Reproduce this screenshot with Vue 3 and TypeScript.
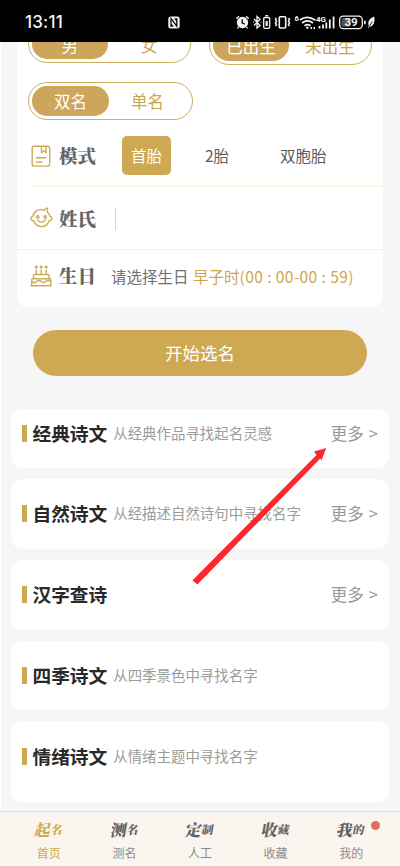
<script setup lang="ts">
interface Section {
  title: string
  hint?: string
  more?: boolean
  size: 'short' | 'normal' | 'tall'
}
interface Tab {
  big: string
  small: string
  label: string
  active?: boolean
  dot?: boolean
}

const modes: string[] = ['首胎', '2胎', '双胞胎']
const sections: Section[] = [
  { title: '经典诗文', hint: '从经典作品寻找起名灵感', more: true, size: 'short' },
  { title: '自然诗文', hint: '从经描述自然诗句中寻找名字', more: true, size: 'normal' },
  { title: '汉字查诗', more: true, size: 'normal' },
  { title: '四季诗文', hint: '从四季景色中寻找名字', size: 'normal' },
  { title: '情绪诗文', hint: '从情绪主题中寻找名字', size: 'tall' },
]
const tabs: Tab[] = [
  { big: '起', small: '名', label: '首页', active: true },
  { big: '测', small: '名', label: '测名' },
  { big: '定', small: '制', label: '人工' },
  { big: '收', small: '藏', label: '收藏' },
  { big: '我', small: '的', label: '我的', dot: true },
]
</script>

<template>
  <div class="screen">
    <header class="status">
      <span class="time">13:11</span>
      <svg class="nfc" width="12" height="13" viewBox="0 0 12 13">
        <rect x=".3" y=".5" width="11.4" height="12" rx="2.5" fill="#f2f2f2" />
        <path d="M3 11V2.5L8.8 10.2V2M5.2 10.7L3 8.2M6.6 2.3L8.8 4.8" fill="none" stroke="#000" stroke-width="1.2" />
      </svg>
      <svg class="sys" width="142" height="20" viewBox="0 0 142 20" fill="none" stroke="#f4f4f4" stroke-width="1.3">
        <g>
          <circle cx="7.5" cy="10.5" r="5" fill="#f4f4f4" />
          <path d="M1.3 6.8L4 4.2M13.7 6.8L11 4.2M3.7 15l-1.3 1.4M11.3 15l1.3 1.4" />
          <path d="M7.2 7.3v3.5l2.6 1.4" stroke="#000" />
        </g>
        <path d="M19 7l6 6.500L22 16V4.500l3 2.700L19 13.500M18.200 10.200h.8M25.600 10.200h.8" stroke-width="1.300" />
        <rect x="28.700" y="5.500" width="6" height="10.800" rx="1.300" />
        <path d="M30.200 3.700h3" />
        <rect x="30.600" y="9" width="2.200" height="5" fill="#f4f4f4" stroke="none" />
        <rect x="44.300" y="4.700" width="6.400" height="11.300" rx="1" stroke-width="1.600" />
        <path d="M41.500 6l-1 1.500 1 1.700-1 1.700 1 1.700-1 1.600M53.500 6l1 1.500-1 1.700 1 1.700-1 1.700 1 1.600" stroke-width="1.500" />
        <path d="M65 8Q72 2.800 80.500 8.200M67 11q5.500-4.100 11 0M69.500 13.700q3.100-2.100 6 0" stroke-width="1.700" />
        <circle cx="72.300" cy="15.800" r="1.200" fill="#f4f4f4" stroke="none" />
        <path d="M75.500 16h1.500M78.500 16h1.500" stroke-width="1.800" />
        <path d="M84.500 16.500v-2.500M88 16.500v-4M91.300 16.500v-6M94.800 16.500v-9M98.600 16.500v-12" stroke-width="1.800" />
        <rect x="104.700" y="4.200" width="22.600" height="12.400" rx="3.500" />
        <rect x="106.500" y="6" width="9" height="8.800" rx="1.500" fill="#555" stroke="none" />
        <path d="M129.800 8.700v3.500" stroke-width="1.700" />
        <path d="M139.300 4.500c-5 2-7 5.300-5.500 9.300l-.9 2.500 1.700-1.500c4-.8 5.500-4.200 4.700-10.300z" fill="#f4f4f4" stroke="none" />
        <path d="M134.300 14.500l3-5" stroke="#000" stroke-width=".8" />
        <g fill="#f4f4f4" stroke="none" class="sys-text">
          <text x="59.500" y="8.800" font-size="7.500">6</text>
          <text x="81" y="9.800" font-size="8">4G</text>
          <text x="116" y="14.300" font-size="11.500" text-anchor="middle">39</text>
        </g>
      </svg>
    </header>

    <main class="content">
      <section class="form">
        <div class="toggles">
          <div class="toggle first"><span class="on">男</span><span>女</span></div>
          <div class="toggle birth"><span class="on">已出生</span><span>未出生</span></div>
        </div>
        <div class="toggle count"><span class="on">双名</span><span>单名</span></div>

        <div class="row mode">
          <svg class="icon" width="24" height="24" viewBox="0 0 24 24">
            <rect x="3.200" y="2.300" width="17.500" height="19.800" rx="1.800" />
            <path d="M12.500 2.500v6.300l2.200-2 2.300 2V2.500M7 13.700h10M7 18h6.500" />
          </svg>
          <span class="name">模式</span>
          <div class="modes">
            <span v-for="(m, i) in modes" :key="m" class="option" :class="{ picked: i === 0 }">{{ m }}</span>
          </div>
        </div>

        <div class="row surname">
          <svg class="icon" width="24" height="24" viewBox="0 0 24 24">
            <path d="M15.500 4.300C9.500 2.200 4.800 5.500 4 10.200 1.800 10.500 1.200 12.700 2.500 14c.7.700 1.500.8 2.300.7C6.300 18.500 9 20.600 12.500 20.600s6.200-2.100 7.700-5.900c1.300.2 2.600-.5 2.600-2.300 0-1.200-.8-2-2-2.200C20.400 8.300 19.500 6.800 18 5.500c.8-.8 1-2 .4-3.300-1.300-.2-2.500.6-2.900 2.100z" />
            <path d="M8.300 13.800q4.200 5 8.400 0" />
            <g class="solid"><circle cx="8.700" cy="11" r="1.200" /><circle cx="16.200" cy="11" r="1.200" /></g>
          </svg>
          <span class="name">姓氏</span>
          <span class="caret"></span>
        </div>

        <div class="row birthday">
          <svg class="icon" width="24" height="24" viewBox="0 0 24 24">
            <path d="M4.500 15v-3.300q0-1.200 1.200-1.200h13.100q1.200 0 1.200 1.200V15M2.700 21.800V16q0-1.300 1.300-1.300h16.500q1.300 0 1.300 1.300v5.800M1.500 21.800h21M3 17.500q2.300 2.300 4.600 0 2.300-2 4.600 0 2.300 2.200 4.600 0 2.300-2 4.600 0M7.300 10.500v-5M12.200 10.500v-5M17.200 10.500v-5" />
            <g class="solid"><circle cx="7.300" cy="3" r=".9" /><circle cx="12.200" cy="3" r=".9" /><circle cx="17.200" cy="3" r=".9" /></g>
          </svg>
          <span class="name">生日</span>
          <span class="date">请选择生日</span>
          <span class="hour">早子时<span class="clock">(00 : 00-00 : 59)</span></span>
        </div>
      </section>

      <button class="start" type="button">开始选名</button>

      <section class="list">
        <article v-for="s in sections" :key="s.title" class="card" :class="s.size">
          <i class="bar"></i>
          <h2>{{ s.title }}</h2>
          <p v-if="s.hint">{{ s.hint }}</p>
          <a v-if="s.more" class="more">更多 <b>&gt;</b></a>
        </article>
      </section>
    </main>

    <nav class="tabs">
      <div v-for="t in tabs" :key="t.label" class="tab" :class="{ active: t.active }">
        <span class="brush"><span class="big">{{ t.big }}</span><span class="small">{{ t.small }}</span></span>
        <span class="label">{{ t.label }}</span>
        <i v-if="t.dot" class="dot"></i>
      </div>
    </nav>

    <svg class="arrow" width="140" height="140" viewBox="0 0 140 140">
      <path d="M1.500 132.300L125.500 7 123 3.500 135.200 0 130.500 12.600 129.300 10.400 6.400 136.500z" fill="#fb292c" />
    </svg>
  </div>
</template>

<style>
body {
  background: #f6f6f6;
}
</style>

<style scoped>
.screen {
  position: relative;
  box-sizing: border-box;
  display: flex;
  flex-direction: column;
  width: 400px;
  height: 866px;
  overflow: hidden;
  background: #f6f6f6;
  font-family: "Noto Sans CJK SC", sans-serif;
}
.status {
  display: flex;
  align-items: center;
  flex: none;
  height: 42px;
  box-sizing: border-box;
  padding: 2px 0 0 25px;
  background: #000;
  color: #f4f4f4;
}
.time {
  width: 143px;
  font: 500 17px/20px Inter, sans-serif;
  letter-spacing: .2px;
}
.nfc {
  margin-right: 55px;
}
.sys-text {
  font-family: Roboto, sans-serif;
  font-weight: 700;
}
.content {
  flex: 1;
  min-height: 0;
  overflow: hidden;
  border-left: 1.500px solid #fff;
  box-sizing: border-box;
  padding: 0 11px 0 10px;
}
.form {
  box-sizing: border-box;
  height: 282px;
  margin: -17px 6px 0;
  background: #fff;
  border-radius: 11px;
}
.toggles {
  display: flex;
  gap: 18px;
  padding-left: 11px;
  height: 57px;
}
.toggle {
  box-sizing: border-box;
  display: flex;
  width: 163px;
  height: 38px;
  padding: 3px;
  border: 1.300px solid #cfae5d;
  border-radius: 20px;
  color: #c9a550;
  font-size: 16.500px;
}
.toggle span {
  display: flex;
  align-items: center;
  justify-content: center;
  width: 77px;
  border-radius: 16px;
}
.toggle .on {
  background: #cda55b;
  color: #fff;
}
.first span {
  box-sizing: border-box;
  width: 76px;
  padding-top: 1px;
}
.first span + span {
  margin-left: 4px;
}
.birth {
  height: 40px;
}
.birth span {
  padding-top: 1px;
  box-sizing: border-box;
}
.birth span + span {
  margin-left: 3px;
}
.count {
  width: 165px;
  margin-left: 11px;
}
.row {
  display: flex;
  align-items: center;
  box-sizing: border-box;
}
.mode {
  height: 67px;
  margin-left: 11px;
  padding: 5px 0 0 1px;
  border-bottom: 1px dotted #eee6d0;
}
.surname {
  height: 63px;
  padding-left: 12px;
  border-bottom: 1px dotted #eee6d0;
}
.birthday {
  height: 53px;
  padding-left: 12px;
}
.icon {
  flex: none;
  fill: none;
  stroke: #ccaa59;
  stroke-width: 1.400;
  stroke-linejoin: round;
}
.birthday .icon {
  margin-top: -2px;
}
.name {
  width: 46px;
  margin: -3px 0 0 6px;
  color: #666;
  font: 900 18.500px/26px "Noto Serif CJK SC", "Noto Sans CJK SC", serif;
}
.mode .name,
.surname .name {
  margin-top: -1px;
}
.modes {
  display: flex;
  align-items: center;
  margin-left: 17px;
}
.option {
  color: #5c5c5c;
  font-size: 15.500px;
}
.option + .option {
  margin: -1px 0 0 34px;
}
.option:last-child {
  margin-left: 51px;
}
.picked {
  width: 49px;
  line-height: 39px;
  border-radius: 5px;
  background: #cea852;
  color: #fff;
  text-align: center;
}
.caret {
  width: 1px;
  height: 23px;
  margin-left: 10px;
  background: #e6d8b2;
}
.date {
  margin: -2px 0 0 6px;
  color: #707070;
  font-size: 15.500px;
}
.hour {
  margin: -2px 0 0 4.500px;
  color: #cda553;
  font-size: 15.500px;
  white-space: nowrap;
}
.clock {
  letter-spacing: .42px;
}
.start {
  display: block;
  width: 334px;
  height: 46px;
  margin: 23px auto 33px;
  padding: 0;
  border: 0;
  border-radius: 23px;
  background: #cea852;
  color: #fff;
  font: 400 17.500px/46px "Noto Sans CJK SC", sans-serif;
}
.list {
  display: flex;
  flex-direction: column;
  gap: 11px;
}
.card {
  display: flex;
  align-items: center;
  flex: none;
  box-sizing: border-box;
  height: 69.750px;
  padding: 0 11px;
  border-radius: 12px;
  background: #fff;
}
.short {
  height: 59px;
  padding-bottom: 11px;
}
.tall {
  height: 81px;
  padding-bottom: 11px;
}
.bar {
  width: 5px;
  height: 17px;
  background: #cea852;
}
h2 {
  margin: -2px 0 0 5.500px;
  color: #292929;
  font-size: 18.700px;
  font-weight: 700;
  line-height: 27px;
}
p {
  margin: -2px 0 0 6px;
  color: #9b9b9b;
  font-size: 14.450px;
}
.more {
  margin: -1px 0 0 auto;
  color: #989898;
  font-size: 16.500px;
  word-spacing: 1.500px;
}
.more b {
  font-weight: 400;
}
.tabs {
  display: flex;
  flex: none;
  box-sizing: border-box;
  height: 55px;
  padding: 0 11px;
  border-top: 1px solid #e8dfbd;
  background: #faf5ee;
}
.tab {
  position: relative;
  display: flex;
  flex-direction: column;
  align-items: center;
  flex: 1;
  color: #8b8b8b;
}
.brush {
  display: flex;
  align-items: center;
  height: 20px;
  margin-top: 7px;
  color: #626262;
  font-family: "Noto Serif CJK SC", "Noto Sans CJK SC", serif;
  font-weight: 900;
  transform: skewX(-10deg);
}
.big {
  font-size: 16px;
}
.small {
  font-size: 11.500px;
}
.label {
  margin-top: 5px;
  font-size: 12px;
  line-height: 17px;
}
.active,
.active .brush {
  color: #d2a84f;
}
.dot {
  position: absolute;
  top: 9px;
  right: 9px;
  width: 9px;
  height: 9px;
  border-radius: 50%;
  background: #e36a5e;
}
.arrow {
  position: absolute;
  left: 191px;
  top: 448px;
}
</style>
